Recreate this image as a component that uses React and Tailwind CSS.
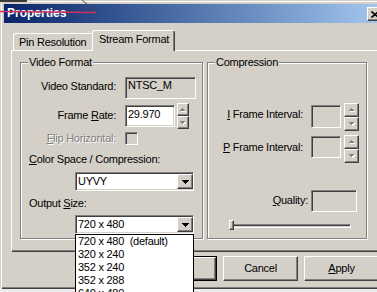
import React from "react";

const SUNKEN =
  "border border-t-[#808080] border-l-[#808080] border-b-white border-r-white shadow-[inset_1px_1px_0_#404040,inset_-1px_-1px_0_#d4d0c8]";
const RAISED =
  "border border-t-white border-l-white border-b-[#404040] border-r-[#404040] shadow-[inset_-1px_-1px_0_#808080]";
const GROUP = "border border-[#808080] shadow-[inset_1px_1px_0_#fff,1px_1px_0_#fff]";

function Tri({ up, disabled }) {
  const c = disabled ? "#808080" : "#000";
  if (disabled) {
    return (
      <svg width="6" height="4" viewBox="0 0 6 4" className="block" shapeRendering="crispEdges">
        {up ? (
          <>
            <rect x="3" y="1" width="1" height="1" fill="#fff" />
            <rect x="2" y="2" width="3" height="1" fill="#fff" />
            <rect x="1" y="3" width="5" height="1" fill="#fff" />
            <rect x="2" y="0" width="1" height="1" fill={c} />
            <rect x="1" y="1" width="3" height="1" fill={c} />
            <rect x="0" y="2" width="5" height="1" fill={c} />
          </>
        ) : (
          <>
            <rect x="1" y="1" width="5" height="1" fill="#fff" />
            <rect x="2" y="2" width="3" height="1" fill="#fff" />
            <rect x="3" y="3" width="1" height="1" fill="#fff" />
            <rect x="0" y="0" width="5" height="1" fill={c} />
            <rect x="1" y="1" width="3" height="1" fill={c} />
            <rect x="2" y="2" width="1" height="1" fill={c} />
          </>
        )}
      </svg>
    );
  }
  return (
    <svg width="7" height="4" viewBox="0 0 7 4" className="block" shapeRendering="crispEdges">
      <rect x="0" y="0" width="7" height="1" fill={c} />
      <rect x="1" y="1" width="5" height="1" fill={c} />
      <rect x="2" y="2" width="3" height="1" fill={c} />
      <rect x="3" y="3" width="1" height="1" fill={c} />
    </svg>
  );
}

function Combo({ value, list }) {
  return (
    <div className="relative w-[119px] h-[19px]">
      <div className={"w-[119px] h-[19px] bg-white flex items-center " + SUNKEN}>
        <div className="flex-1 pl-[2px] leading-[13px] whitespace-pre">{value}</div>
        <div className={"w-[16px] h-[15px] bg-[#d4d0c8] flex items-center justify-center " + RAISED}>
          <Tri />
        </div>
      </div>
      {list && (
        <div className="absolute left-0 top-[19px] z-20 w-[119px] h-[70px] bg-white border border-black">
          {list.map((t) => (
            <div key={t} className="h-[13px] pl-[2px] leading-[13px] whitespace-pre">
              {t}
            </div>
          ))}
        </div>
      )}
    </div>
  );
}

function U({ children }) {
  return <span className="underline decoration-1 underline-offset-[1px]">{children}</span>;
}

export default function App() {
  return (
    <div className="relative w-[377px] h-[292px] overflow-hidden bg-[#ececec] font-['Liberation_Sans',Arial,sans-serif] text-[11px] leading-[13px] tracking-[-0.25px] text-black">
      <div className="w-[389px] h-[289px] bg-[#d4d0c8] pt-[4px] pl-[4px] shadow-[inset_1px_1px_0_#d4d0c8,inset_2px_2px_0_#fff,inset_-1px_-1px_0_#404040,inset_-2px_-2px_0_#808080]">
        {/* Title bar */}
        <div className="w-[381px] h-[19px] flex items-start justify-between bg-linear-to-r from-[#0a246a] to-[#a6caf0]">
          <span className="pl-[3px] pt-[3px] text-white font-bold text-[12px] leading-[13px] tracking-normal">
            Properties
          </span>
          <div className={"mt-[3px] mr-[2px] w-[16px] h-[14px] bg-[#d4d0c8] flex items-center justify-center " + RAISED}>
            <svg width="8" height="7" viewBox="0 0 8 7" className="block">
              <path d="M0.5 0.5L7.5 6.5M7.5 0.5L0.5 6.5" stroke="#000" strokeWidth="1.6" />
            </svg>
          </div>
        </div>

        {/* Tabs */}
        <div className="mt-[7px] ml-[9px] h-[20px] flex items-end">
          <div className="w-[79px] h-[17px] border-l border-t border-white rounded-tl-[3px] pl-[5px] pt-[2px]">
            Pin Resolution
          </div>
          <div className="relative z-10 w-[83px] h-[21px] -mb-[1px] bg-[#d4d0c8] border-l border-t border-r border-l-white border-t-white border-r-[#404040] shadow-[inset_-1px_0_0_#808080] rounded-t-[3px] pl-[6px] pt-[2px]">
            Stream Format
          </div>
        </div>

        {/* Tab panel */}
        <div className="ml-[7px] w-[372px] h-[202px] border-l border-t border-b border-l-white border-t-white border-b-[#404040] shadow-[inset_0_-1px_0_#808080] pt-[11px] pl-[8px] flex items-start gap-[4px]">
          {/* Video Format */}
          <div className={"w-[183px] h-[177px] flex flex-col " + GROUP}>
            <div className="-mt-[7px] ml-[7px] self-start px-[1px] bg-[#d4d0c8]">Video Format</div>
            <div className="mt-[8px] flex items-start">
              <div className="w-[95px] mt-[3px] text-right">Video Standard:</div>
              <div className={"ml-[9px] w-[71px] h-[22px] bg-[#d4d0c8] pl-[2px] pt-[1px] " + SUNKEN}>NTSC_M</div>
            </div>
            <div className="mt-[4px] flex items-start">
              <div className="w-[95px] mt-[6px] text-right">
                Frame <U>R</U>ate:
              </div>
              <div className={"ml-[9px] mt-[2px] w-[50px] h-[22px] bg-white pl-[2px] pt-[2px] " + SUNKEN}>29.970</div>
              <div className="ml-[2px] flex flex-col">
                <div className={"w-[12px] h-[13px] bg-[#d4d0c8] flex items-center justify-center " + RAISED}>
                  <Tri up disabled />
                </div>
                <div className={"w-[12px] h-[13px] bg-[#d4d0c8] flex items-center justify-center " + RAISED}>
                  <Tri disabled />
                </div>
              </div>
            </div>
            <div className="mt-[3px] flex items-start">
              <div className="w-[95px] text-right text-[#808080] [text-shadow:1px_1px_0_#fff]">
                <U>F</U>lip Horizontal:
              </div>
              <div className={"ml-[9px] w-[13px] h-[13px] bg-[#d4d0c8] " + SUNKEN} />
            </div>
            <div className="mt-[8px] ml-[8px]">
              <U>C</U>olor Space / Compression:
            </div>
            <div className="mt-[6px] ml-[54px]">
              <Combo value="UYVY" />
            </div>
            <div className="mt-[6px] ml-[8px]">
              Output <U>S</U>ize:
            </div>
            <div className="mt-[5px] ml-[54px]">
              <Combo
                value="720 x 480"
                list={["720 x 480  (default)", "320 x 240", "352 x 240", "352 x 288", "640 x 480"]}
              />
            </div>
          </div>

          {/* Compression */}
          <div className={"w-[160px] h-[177px] flex flex-col " + GROUP}>
            <div className="-mt-[7px] ml-[7px] self-start px-[1px] bg-[#d4d0c8]">Compression</div>
            <div className="mt-[34px] flex items-start">
              <div className="w-[95px] mt-[5px] text-right">
                <U>I</U> Frame Interval:
              </div>
              <div className={"ml-[8px] mt-[2px] w-[30px] h-[23px] bg-[#d4d0c8] " + SUNKEN} />
              <div className="ml-[3px] flex flex-col">
                <div className={"w-[15px] h-[14px] bg-[#d4d0c8] flex items-center justify-center " + RAISED}>
                  <Tri up disabled />
                </div>
                <div className={"w-[15px] h-[14px] bg-[#d4d0c8] flex items-center justify-center " + RAISED}>
                  <Tri disabled />
                </div>
              </div>
            </div>
            <div className="mt-[4px] flex items-start">
              <div className="w-[95px] mt-[6px] text-right">
                <U>P</U> Frame Interval:
              </div>
              <div className={"ml-[8px] mt-[1px] w-[30px] h-[22px] bg-[#d4d0c8] " + SUNKEN} />
              <div className="ml-[3px] flex flex-col">
                <div className={"w-[15px] h-[14px] bg-[#d4d0c8] flex items-center justify-center " + RAISED}>
                  <Tri up disabled />
                </div>
                <div className={"w-[15px] h-[14px] bg-[#d4d0c8] flex items-center justify-center " + RAISED}>
                  <Tri disabled />
                </div>
              </div>
            </div>
            <div className="mt-[27px] flex items-start">
              <div className="w-[100px] mt-[4px] text-right">
                <U>Q</U>uality:
              </div>
              <div className={"ml-[3px] w-[46px] h-[22px] bg-[#d4d0c8] " + SUNKEN} />
            </div>
            <div className="mt-[8px] ml-[21px] relative w-[122px] h-[10px]">
              <div className="mt-[4px] h-[4px] border border-t-[#808080] border-l-[#808080] border-b-white border-r-white shadow-[inset_0_1px_0_#404040]" />
              <div className={"absolute left-0 top-0 w-[5px] h-[10px] bg-[#d4d0c8] " + RAISED} />
            </div>
          </div>
        </div>

        {/* Buttons */}
        <div className="mt-[4px] ml-[138px] flex gap-[6px]">
          <div className="w-[75px] h-[25px] border border-black">
            <div className={"h-full flex items-center justify-center " + RAISED}>OK</div>
          </div>
          <div className={"w-[75px] h-[25px] flex items-center justify-center " + RAISED}>Cancel</div>
          <div className={"w-[75px] h-[25px] flex items-center justify-center " + RAISED}>
            <span>
              <U>A</U>pply
            </span>
          </div>
        </div>
      </div>

      {/* annotation marks drawn over the title bar */}
      <svg className="absolute left-0 top-0 z-30 pointer-events-none" width="100" height="16" viewBox="0 0 100 16">
        <rect x="0" y="0" width="27" height="2" fill="#3c3c3c" />
        <path d="M82 0L95 11" stroke="#4a4a4a" strokeWidth="1" />
        <path d="M0 11.5L96 12.5" stroke="#d0305a" strokeWidth="1.5" />
      </svg>
    </div>
  );
}
